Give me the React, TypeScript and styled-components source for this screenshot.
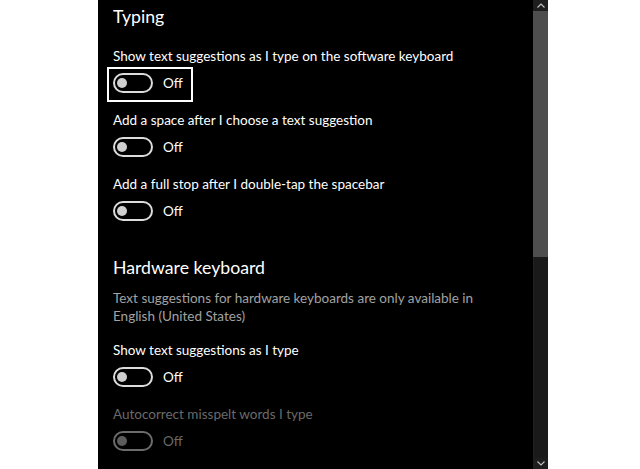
import React from "react";
import styled, { createGlobalStyle } from "styled-components";

const GlobalStyle = createGlobalStyle`
  html, body { margin: 0; padding: 0; background: #ffffff; }
  #root { height: 469px; }
`;

const Page = styled.div`
  display: flex;
  justify-content: flex-start;
  height: 469px;
  padding-left: 98px;
  background: #ffffff;
  font-family: Lato, "Noto Sans", sans-serif;
`;

const Panel = styled.div`
  display: flex;
  width: 450px;
  height: 469px;
  background: #000000;
  overflow: hidden;
`;

const Content = styled.div`
  flex: 1;
  display: flex;
  flex-direction: column;
  padding-left: 15px;
`;

const SectionTitle = styled.h2<{ $top: number }>`
  margin: ${(p) => p.$top}px 0 0 0;
  font-family: Lato, "Noto Sans", sans-serif;
  font-weight: 400;
  font-size: 17.7px;
  line-height: 24px;
  color: #ffffff;
`;

const Description = styled.p`
  margin: 9px 0 0 0;
  width: 380px;
  font-size: 13.5px;
  line-height: 18px;
  color: #a2a2a2;
`;

const Item = styled.div<{ $top: number }>`
  display: flex;
  flex-direction: column;
  align-items: flex-start;
  margin-top: ${(p) => p.$top}px;
`;

const Label = styled.div<{ $disabled?: boolean }>`
  font-size: 13.5px;
  line-height: 20px;
  color: ${(p) => (p.$disabled ? "#6a6a6a" : "#ffffff")};
  white-space: nowrap;
`;

const ToggleBox = styled.div<{ $focused?: boolean }>`
  display: flex;
  align-items: center;
  margin: 1px 0 8px -6px;
  padding: 4px 8px 7px 4px;
  border: 2px solid ${(p) => (p.$focused ? "#ffffff" : "transparent")};
`;

const Track = styled.div<{ $disabled?: boolean }>`
  box-sizing: border-box;
  width: 40px;
  height: 20px;
  border-radius: 10px;
  border: 2px solid ${(p) => (p.$disabled ? "#6c6c6c" : "#dcdcdc")};
  display: flex;
  align-items: center;
  padding-left: 2px;
`;

const Knob = styled.div<{ $disabled?: boolean }>`
  width: 10px;
  height: 10px;
  border-radius: 50%;
  background: ${(p) => (p.$disabled ? "#5c5c5c" : "#cfcfcf")};
`;

const State = styled.span<{ $disabled?: boolean }>`
  margin-left: 10px;
  font-size: 13.5px;
  line-height: 20px;
  color: ${(p) => (p.$disabled ? "#6a6a6a" : "#ffffff")};
`;

const ScrollBar = styled.div`
  width: 15px;
  display: flex;
  flex-direction: column;
  background: #1a1a1a;
`;

const ArrowButton = styled.div`
  height: 11px;
  display: flex;
  align-items: center;
  justify-content: center;
  background: #1e1e1e;
  color: #bdbdbd;
`;

const Thumb = styled.div`
  height: 246px;
  background: #4e4e4e;
`;

const TrackFill = styled.div`
  flex: 1;
  background: #1a1a1a;
  border-left: 1px solid #222222;
`;

type ToggleProps = {
  label: string;
  top: number;
  focused?: boolean;
  disabled?: boolean;
};

function ToggleSetting({ label, top, focused, disabled }: ToggleProps) {
  return (
    <Item $top={top}>
      <Label $disabled={disabled}>{label}</Label>
      <ToggleBox $focused={focused}>
        <Track $disabled={disabled}>
          <Knob $disabled={disabled} />
        </Track>
        <State $disabled={disabled}>Off</State>
      </ToggleBox>
    </Item>
  );
}

function Chevron({ up }: { up?: boolean }) {
  return (
    <svg width="8" height="5" viewBox="0 0 8 5">
      <path
        d={up ? "M0.5 4.5 L4 1 L7.5 4.5" : "M0.5 0.5 L4 4 L7.5 0.5"}
        fill="none"
        stroke="currentColor"
        strokeWidth="1.2"
      />
    </svg>
  );
}

export default function App() {
  return (
    <>
      <GlobalStyle />
      <Page>
        <Panel>
          <Content>
            <SectionTitle $top={5}>Typing</SectionTitle>
            <ToggleSetting
              top={17}
              focused
              label="Show text suggestions as I type on the software keyboard"
            />
            <ToggleSetting top={0} label="Add a space after I choose a text suggestion" />
            <ToggleSetting top={0} label="Add a full stop after I double-tap the spacebar" />
            <SectionTitle $top={18}>Hardware keyboard</SectionTitle>
            <Description>
              Text suggestions for hardware keyboards are only available in English (United States)
            </Description>
            <ToggleSetting top={15} label="Show text suggestions as I type" />
            <ToggleSetting top={0} disabled label="Autocorrect misspelt words I type" />
          </Content>
          <ScrollBar>
            <ArrowButton>
              <Chevron up />
            </ArrowButton>
            <Thumb />
            <TrackFill />
            <ArrowButton>
              <Chevron />
            </ArrowButton>
          </ScrollBar>
        </Panel>
      </Page>
    </>
  );
}
